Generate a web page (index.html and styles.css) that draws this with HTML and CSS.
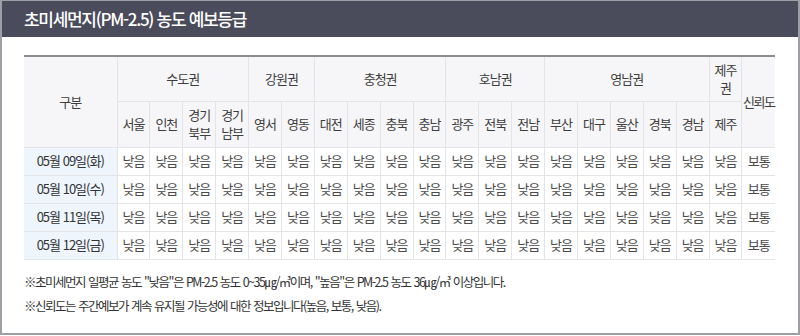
FILE: index.html
```html
<!DOCTYPE html>
<html lang="ko">
<head>
<meta charset="utf-8">
<link rel="stylesheet" href="styles.css">
</head>
<body>
<div class="panel">
  <div class="panel-head">초미세먼지(PM-2.5) 농도 예보등급</div>
  <div class="panel-body">
    <table class="grade">
      <colgroup>
        <col class="c-date">
        <col span="20">
      </colgroup>
      <thead>
        <tr class="h1">
          <th rowspan="2">구분</th>
          <th colspan="4">수도권</th>
          <th colspan="2">강원권</th>
          <th colspan="4">충청권</th>
          <th colspan="3">호남권</th>
          <th colspan="5">영남권</th>
          <th>제주<br>권</th>
          <th rowspan="2" class="nowrap">신뢰도</th>
        </tr>
        <tr class="h2">
          <th>서울</th><th>인천</th><th>경기<br>북부</th><th>경기<br>남부</th>
          <th>영서</th><th>영동</th>
          <th>대전</th><th>세종</th><th>충북</th><th>충남</th>
          <th>광주</th><th>전북</th><th>전남</th>
          <th>부산</th><th>대구</th><th>울산</th><th>경북</th><th>경남</th>
          <th>제주</th>
        </tr>
      </thead>
      <tbody>
        <tr><th class="date">05월 09일(화)</th><td>낮음</td><td>낮음</td><td>낮음</td><td>낮음</td><td>낮음</td><td>낮음</td><td>낮음</td><td>낮음</td><td>낮음</td><td>낮음</td><td>낮음</td><td>낮음</td><td>낮음</td><td>낮음</td><td>낮음</td><td>낮음</td><td>낮음</td><td>낮음</td><td>낮음</td><td>보통</td></tr>
        <tr><th class="date">05월 10일(수)</th><td>낮음</td><td>낮음</td><td>낮음</td><td>낮음</td><td>낮음</td><td>낮음</td><td>낮음</td><td>낮음</td><td>낮음</td><td>낮음</td><td>낮음</td><td>낮음</td><td>낮음</td><td>낮음</td><td>낮음</td><td>낮음</td><td>낮음</td><td>낮음</td><td>낮음</td><td>보통</td></tr>
        <tr><th class="date">05월 11일(목)</th><td>낮음</td><td>낮음</td><td>낮음</td><td>낮음</td><td>낮음</td><td>낮음</td><td>낮음</td><td>낮음</td><td>낮음</td><td>낮음</td><td>낮음</td><td>낮음</td><td>낮음</td><td>낮음</td><td>낮음</td><td>낮음</td><td>낮음</td><td>낮음</td><td>낮음</td><td>보통</td></tr>
        <tr><th class="date">05월 12일(금)</th><td>낮음</td><td>낮음</td><td>낮음</td><td>낮음</td><td>낮음</td><td>낮음</td><td>낮음</td><td>낮음</td><td>낮음</td><td>낮음</td><td>낮음</td><td>낮음</td><td>낮음</td><td>낮음</td><td>낮음</td><td>낮음</td><td>낮음</td><td>낮음</td><td>낮음</td><td>보통</td></tr>
      </tbody>
    </table>
    <p class="note">※초미세먼지 일평균 농도 "낮음"은 PM-2.5 농도 0~35㎍/㎥이며, "높음"은 PM-2.5 농도 36㎍/㎥ 이상입니다.</p>
    <p class="note">※신뢰도는 주간예보가 계속 유지될 가능성에 대한 정보입니다(높음, 보통, 낮음).</p>
  </div>
</div>
</body>
</html>
```

FILE: styles.css
```css
html, body {
  margin: 0;
  padding: 0;
  background: #fff;
}
body {
  font-family: "Noto Sans CJK KR", "Noto Sans", sans-serif;
  color: #444;
}
.panel {
  width: 800px;
  height: 335px;
  box-sizing: border-box;
  border: 2px solid #9d9fa7;
  border-top-width: 1px;
  background: #fff;
}
.panel-head {
  height: 36px;
  background: #4a4c5b;
  color: #fff;
  font-size: 17px;
  font-weight: 500;
  letter-spacing: -1.3px;
  line-height: 36px;
  padding-left: 22px;
}
.panel-body {
  padding: 18px 23px 0 22px;
}
.grade {
  width: 751px;
  border-collapse: collapse;
  table-layout: fixed;
  border-top: 2px solid #8c8c8c;
  font-size: 13px;
  letter-spacing: -1px;
}
.c-date {
  width: 93px;
}
.grade th,
.grade td {
  padding: 0;
  text-align: center;
  font-weight: 400;
  border: 1px solid #e4e4e8;
  line-height: 18px;
  color: #4a4a4a;
}
.grade thead th {
  background: #f6f6f8;
  color: #3d3d3d;
}
.grade thead th.nowrap {
  white-space: nowrap;
  letter-spacing: -1.5px;
}
.grade tr.h1 { height: 45px; }
.grade tr.h2 { height: 46px; }
.grade tbody tr { height: 28px; }
.grade tbody th.date {
  background: #eef5fd;
  color: #333;
  border-left: 0;
}
.grade thead tr.h1 th:first-child { border-left: 0; }
.grade th:last-child,
.grade td:last-child { border-right: 0; }
.note {
  margin: 0;
  font-size: 12.5px;
  letter-spacing: -1.5px;
  word-spacing: 1px;
  line-height: 24px;
  color: #333;
}
.grade + .note { margin-top: 10px; }
```
